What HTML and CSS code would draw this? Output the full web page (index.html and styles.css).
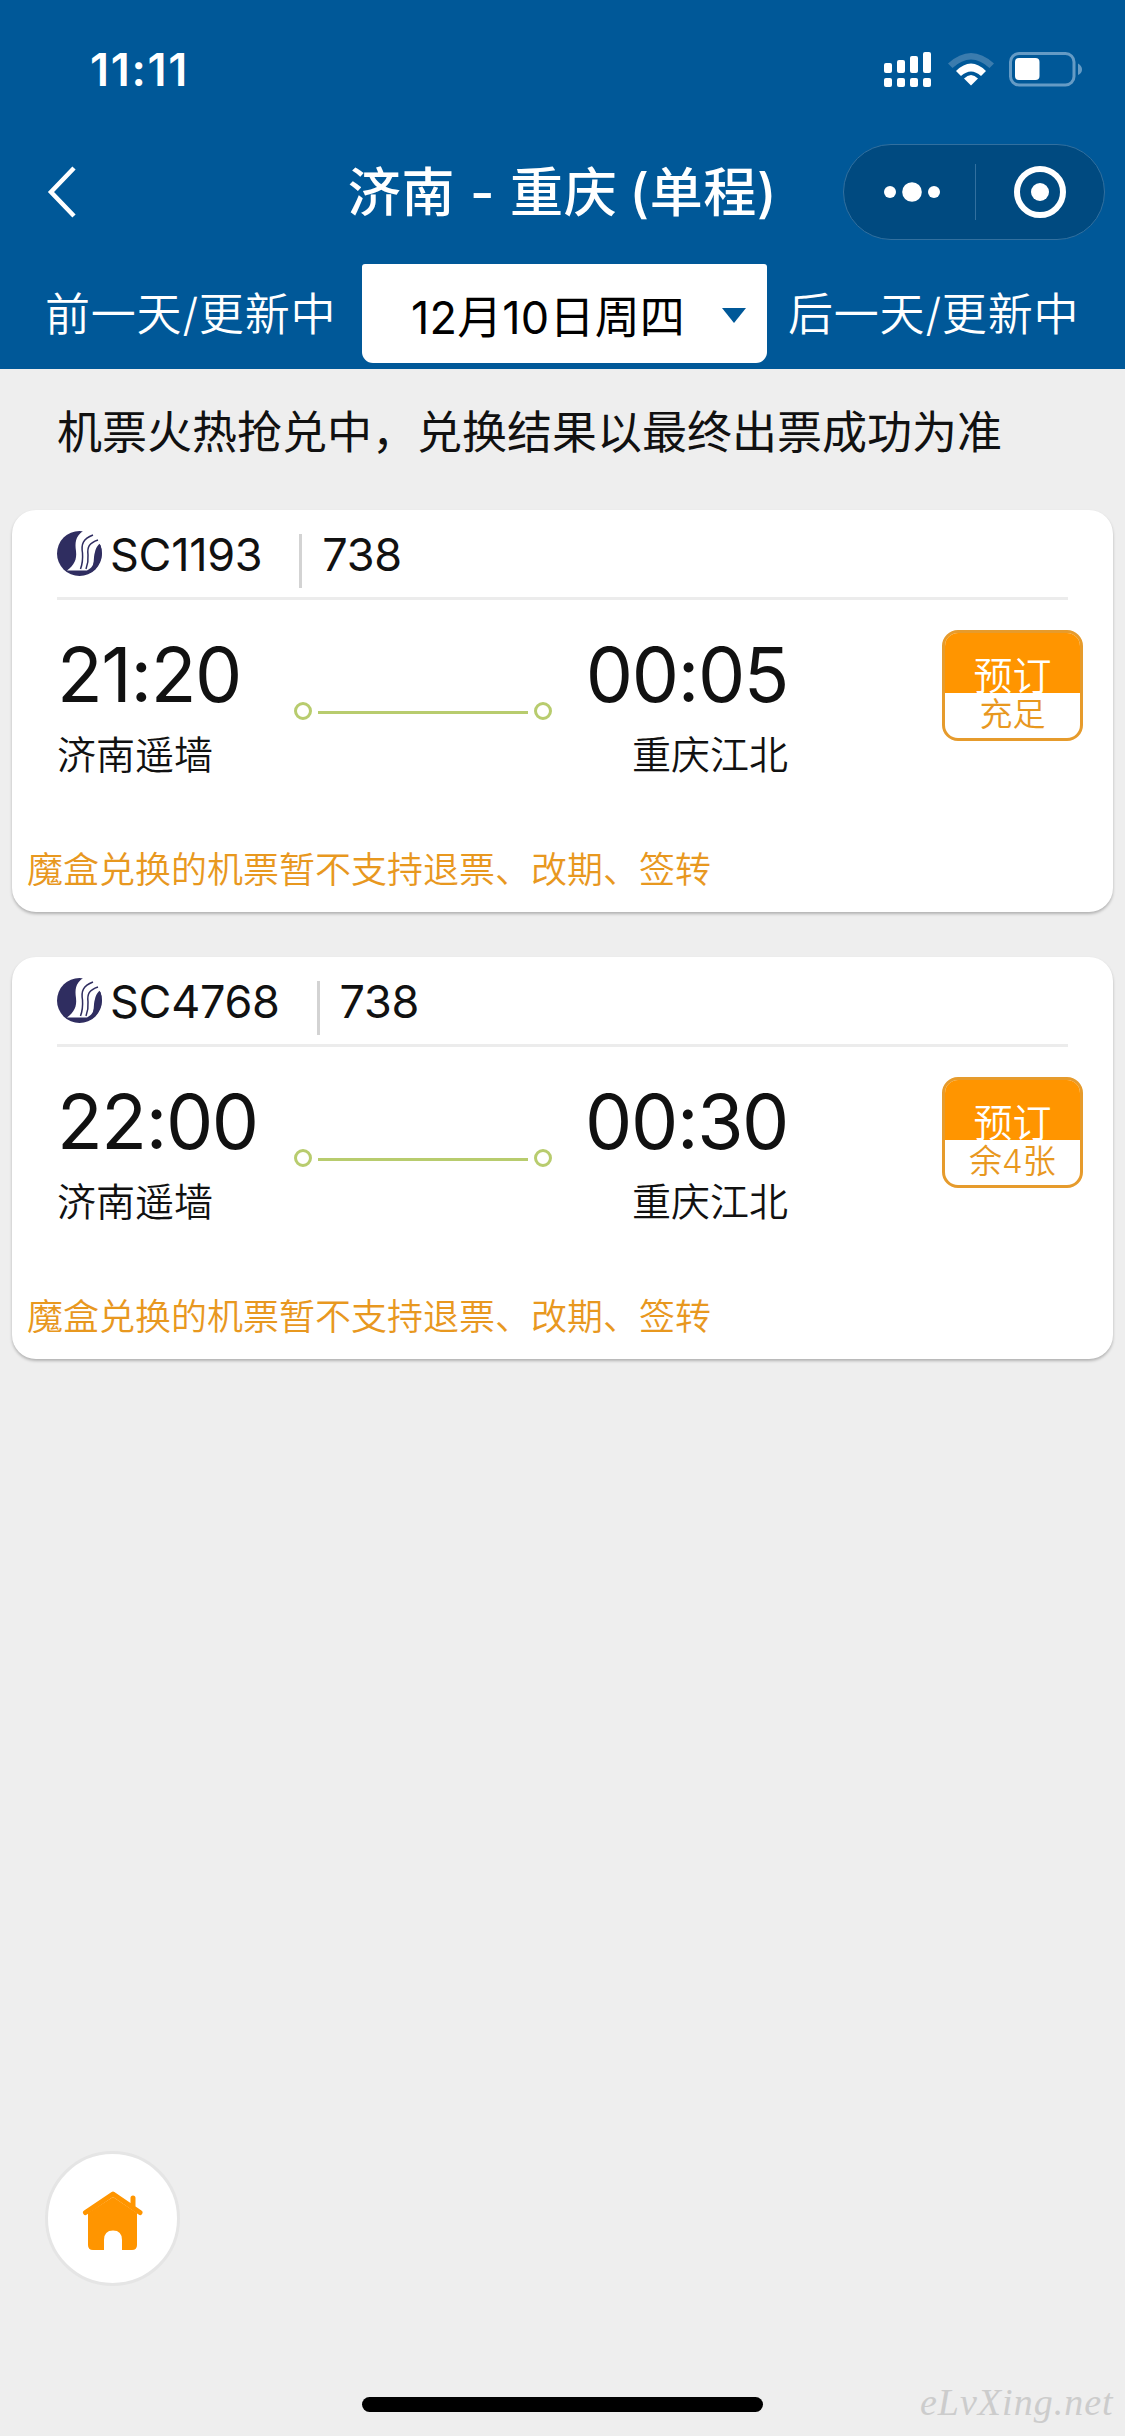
FILE: index.html
```html
<!DOCTYPE html>
<html lang="zh-CN">
<head>
<meta charset="utf-8">
<title>济南 - 重庆 (单程)</title>
<link rel="stylesheet" href="styles.css">
</head>
<body>
<svg width="0" height="0" class="defs">
  <symbol id="airline" viewBox="0 0 45 45">
    <circle cx="22.5" cy="22.5" r="22.5" fill="#2f2d60"/>
    <path d="M26 0C18 6 18 12 19 20C20 29 17 34 10 39.500H33.500C38 35 36 27 38 21C39 16 42 12 45 12V0Z" fill="#fff"/>
    <path d="M36 4C26 8 24 13 25.500 22C26 29 25 34 23.500 38M41 9C32 12 30 16 31 24C31.500 30 30.500 34 29 38" fill="none" stroke="#2f2d60" stroke-width="1.500"/>
    <path d="M43.500 14C47 25 43 36 33 42L30 39.500C40 35 36 25 40 18Z" fill="#2f2d60"/>
  </symbol>
</svg>
<div class="screen">
  <header class="header">
    <div class="status">
      <span class="clock">11:11</span>
      <svg class="status-icons" width="202" height="40" viewBox="0 0 202 40">
        <g fill="#fff">
          <rect x="2" y="13" width="8" height="10" rx="2"/><rect x="15" y="10" width="8" height="13" rx="2"/><rect x="28" y="6" width="8" height="17" rx="2"/><rect x="41" y="2" width="8" height="21" rx="2"/>
          <rect x="2" y="28" width="8" height="9" rx="2"/><rect x="15" y="28" width="8" height="9" rx="2"/><rect x="28" y="28" width="8" height="9" rx="2"/><rect x="41" y="28" width="8" height="9" rx="2"/>
        </g>
        <path d="M66 13.500Q89 -7.500 112 13.500L107.500 18Q89 1 70.500 18Z" fill="#3b7cae"/>
        <path d="M74 21Q89 6 104 21L99 26Q89 17 79 26Z" fill="#fff"/>
        <path d="M82 28.500Q89 21.500 96 28.500L89 35.500Z" fill="#fff"/>
        <rect x="128.500" y="3.500" width="63.500" height="31.500" rx="8.500" fill="none" stroke="#659bc5" stroke-width="3"/>
        <rect x="133" y="8" width="24.500" height="22" rx="4" fill="#fff"/>
        <path d="M196 13.500Q200 16 200 19.500T196 25Z" fill="#659bc5"/>
      </svg>
    </div>
    <div class="nav">
      <svg class="back" width="30" height="52" viewBox="0 0 30 52"><path d="M27 2L4 26L27 50" fill="none" stroke="#fff" stroke-width="4.500"/></svg>
      <h1 class="title">济南 - 重庆<span class="trip">(单程)</span></h1>
      <div class="capsule">
        <svg width="56" height="20" viewBox="0 0 56 20" fill="#fff"><circle cx="6" cy="10" r="6"/><circle cx="28" cy="10" r="9.800"/><circle cx="50" cy="10" r="6"/></svg>
        <i class="capsule-line"></i>
        <svg width="52" height="52" viewBox="0 0 52 52"><circle cx="26" cy="26" r="23" fill="none" stroke="#fff" stroke-width="6"/><circle cx="26" cy="26" r="9" fill="#fff"/></svg>
      </div>
    </div>
    <div class="days">
      <span class="day">前一天/更新中</span>
      <div class="date"><span>12月10日周四</span><i class="caret"></i></div>
      <span class="day">后一天/更新中</span>
    </div>
  </header>

  <p class="notice">机票火热抢兑中，兑换结果以最终出票成功为准</p>

  <main class="flights">
    <article class="card">
      <div class="flight"><svg width="45" height="45"><use href="#airline"/></svg><span class="number">SC1193</span><span class="model">738</span></div>
      <div class="route">
        <div class="stop"><span class="time">21:20</span><span class="airport">济南遥墙</span></div>
        <div class="track"><i class="dot"></i><i class="line"></i><i class="dot"></i></div>
        <div class="stop stop-end"><span class="time">00:05</span><span class="airport">重庆江北</span></div>
        <div class="book"><div class="book-top">预订</div><div class="book-left">充足</div></div>
      </div>
      <p class="warning">魔盒兑换的机票暂不支持退票、改期、签转</p>
    </article>
    <article class="card">
      <div class="flight"><svg width="45" height="45"><use href="#airline"/></svg><span class="number">SC4768</span><span class="model">738</span></div>
      <div class="route">
        <div class="stop"><span class="time">22:00</span><span class="airport">济南遥墙</span></div>
        <div class="track"><i class="dot"></i><i class="line"></i><i class="dot"></i></div>
        <div class="stop stop-end"><span class="time">00:30</span><span class="airport">重庆江北</span></div>
        <div class="book"><div class="book-top">预订</div><div class="book-left">余4张</div></div>
      </div>
      <p class="warning">魔盒兑换的机票暂不支持退票、改期、签转</p>
    </article>
  </main>

  <footer class="footer">
    <div class="home">
      <svg width="62" height="62" viewBox="0 0 62 62">
        <path d="M6 23V55Q6 60 11 60H22V50Q22 40.500 31 40.500T40 50V60H50Q55 60 55 55V23L31 7Z" fill="#ff9500"/>
        <path d="M3.500 22.500L31 4L58 22.500M51 8V17" fill="none" stroke="#ff9500" stroke-width="5" stroke-linecap="round" stroke-linejoin="round"/>
      </svg>
    </div>
    <div class="bottom"><i class="indicator"></i><span class="mark">eLvXing.net</span></div>
  </footer>
</div>
</body>
</html>
```
FILE: styles.css
```css
* { box-sizing: border-box; margin: 0; }
body {
  background: #eee;
  color: #111;
  font-family: Inter, "Noto Sans CJK SC", sans-serif;
  font-weight: 350;
}
svg { display: block; flex: none; }
i { display: block; flex: none; }
.defs { position: absolute; }
.screen { width: 1125px; height: 2436px; display: flex; flex-direction: column; overflow: hidden; }

.header { height: 369px; background: #005898; color: #fff; display: flex; flex-direction: column; }
.status { height: 144px; display: flex; justify-content: space-between; padding: 50px 41px 0 90px; }
.clock { font-size: 45px; line-height: 39px; font-weight: 600; letter-spacing: 1.7px; }
.nav { height: 96px; display: grid; grid-template-columns: 282px 1fr 282px; align-items: center; }
.back { margin-left: 47px; }
.title { font-size: 53px; line-height: 60px; font-weight: 500; text-align: center; white-space: nowrap; letter-spacing: .7px; padding-top: 1px; }
.trip { margin-left: 12px; }
.capsule { width: 262px; height: 96px; border: 1px solid #32709f; border-radius: 48px; background: #004a80; display: flex; align-items: center; padding-left: 40px; }
.capsule-line { width: 1px; height: 56px; background: #32709f; margin: 0 38px 0 35px; }
.days { display: flex; align-items: flex-start; margin-top: 24px; padding-left: 45px; }
.day { width: 317px; font-size: 45px; line-height: 60px; letter-spacing: .8px; padding-top: 21px; white-space: nowrap; }
.date { width: 405px; height: 99px; margin-right: 21px; background: #fff; color: #000; border-radius: 3px 3px 11px 11px; display: flex; align-items: center; justify-content: space-between; padding: 1px 21px 0 49px; font-size: 45px; letter-spacing: .2px; font-weight: 380; white-space: nowrap; }
.caret { border: 12px solid transparent; border-top: 15px solid #005898; border-bottom: 0; margin-top: 3px; }

.notice { height: 141px; padding: 34px 57px 0; font-size: 45px; line-height: 60px; white-space: nowrap; font-weight: 400; }

.flights { display: flex; flex-direction: column; gap: 45px; padding: 0 12px; }
.card { height: 402px; background: #fff; border-radius: 24px; box-shadow: 0 2px 3px rgba(0, 0, 0, .25); }
.flight { height: 90px; margin: 0 45px; border-bottom: 3px solid #ececec; display: flex; align-items: flex-start; padding-top: 21px; font-size: 45px; line-height: 47px; font-weight: 375; }
.number { padding-left: 8px; margin-right: 37px; letter-spacing: -.3px; }
.model { height: 54px; border-left: 3px solid #d3d3d3; margin-top: 3px; padding-left: 20px; line-height: 41px; letter-spacing: -.3px; }
.route { height: 231px; display: flex; align-items: flex-start; padding-left: 45px; }
.stop { width: 237px; padding-top: 40px; display: flex; flex-direction: column; }
.stop-end { width: 236px; align-items: flex-end; }
.time { font-size: 75px; line-height: 70px; font-weight: 380; letter-spacing: -1.4px; font-feature-settings: "calt" 0; }
.airport { font-size: 39px; line-height: 50px; margin-top: 20px; }
.track { width: 258px; display: flex; align-items: center; justify-content: space-between; margin-top: 102px; }
.dot { width: 18px; height: 18px; border: 3px solid #b8cc6e; border-radius: 50%; }
.line { width: 210px; height: 3px; background: #b8cc6e; margin-top: 2px; }
.book { width: 141px; height: 111px; margin: 30px 0 0 154px; border: 3px solid #e69b2c; border-radius: 16px; text-align: center; overflow: hidden; }
.book-top { height: 60px; background: #ff9500; color: #fff; font-size: 39px; line-height: 85px; }
.book-left { color: #e8981f; font-size: 33px; line-height: 43px; }
.warning { padding: 11px 0 0 15px; font-size: 36px; line-height: 56px; color: #e8981f; }

.footer { margin-top: auto; height: 285px; padding-left: 45px; }
.home { width: 135px; height: 135px; border-radius: 50%; border: 3px solid #e5e5e5; background: #fff; display: flex; align-items: center; justify-content: center; padding-top: 4px; }
.bottom { display: flex; align-items: flex-start; margin-top: 90px; padding-left: 317px; }
.indicator { width: 401px; height: 15px; border-radius: 8px; background: #000; margin-top: 21px; }
.mark { margin-left: 157px; font: italic 38px/52px "Liberation Serif", serif; color: #ccc; letter-spacing: 1px; }
```
